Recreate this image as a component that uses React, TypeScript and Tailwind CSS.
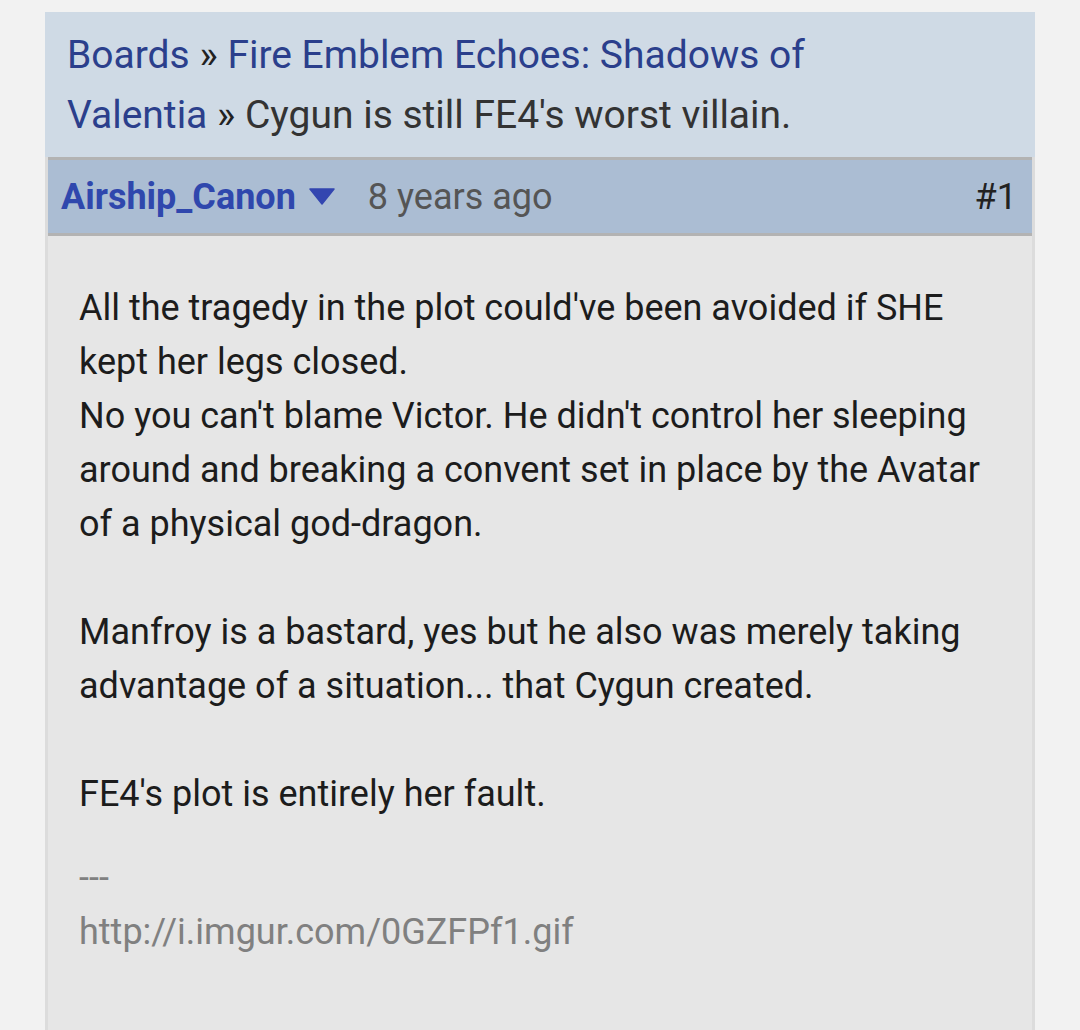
export default function App() {
  return (
    <div className="min-h-screen bg-[#f2f2f2] pt-3 px-[45px] font-['Roboto',sans-serif]">
      <div className="w-[990px] overflow-hidden">
        {/* breadcrumb */}
        <div className="bg-[#cfdae5] pl-[22px] pr-6 pt-[13px] pb-3 text-[39px] leading-[60px] text-[#333]">
          <a href="#" className="text-[#2b3f8c]">Boards</a>
          <span className="text-[#222]"> » </span>
          <a href="#" className="text-[#2b3f8c]">Fire Emblem Echoes: Shadows of</a>
          <br />
          <a href="#" className="text-[#2b3f8c]">Valentia</a>
          <span className="text-[#222]"> » </span>
          <span>Cygun is still FE4's worst villain.</span>
        </div>

        {/* post */}
        <div className="border-x-[3px] border-[#dcdcdc]">
          <div className="flex items-center h-[79px] bg-[#abbdd3] border-y-[3px] border-[#b3b3b3] pl-[13px] pr-[15px]">
            <a href="#" className="text-[36px] font-bold text-[#2f47ad]">Airship_Canon</a>
            <svg width="26" height="18" viewBox="0 0 26 18" className="ml-[13px] mr-[33px]">
              <path d="M1 1 H25 L13 16 Z" fill="#3346b0" stroke="#3346b0" strokeWidth="1.5" strokeLinejoin="round" />
            </svg>
            <span className="text-[36px] text-[#555]">8 years ago</span>
            <span className="ml-auto text-[36px] text-[#222]">#1</span>
          </div>

          <div className="bg-[#e6e6e6] px-[31px] pt-[45px] pb-[80px] text-[36px] leading-[54px] text-[#1c1c1c]">
            <p>
              All the tragedy in the plot could've been avoided if SHE kept her legs closed.
              <br />
              No you can't blame Victor. He didn't control her sleeping around and breaking a convent set in place by the Avatar of a physical god-dragon.
            </p>
            <p className="mt-[54px]">
              Manfroy is a bastard, yes but he also was merely taking advantage of a situation... that Cygun created.
            </p>
            <p className="mt-[54px]">FE4's plot is entirely her fault.</p>
            <div className="mt-[30px] text-[#808080]">
              <div>---</div>
              <div>http://i.imgur.com/0GZFPf1.gif</div>
            </div>
          </div>
        </div>
      </div>
    </div>
  );
}
